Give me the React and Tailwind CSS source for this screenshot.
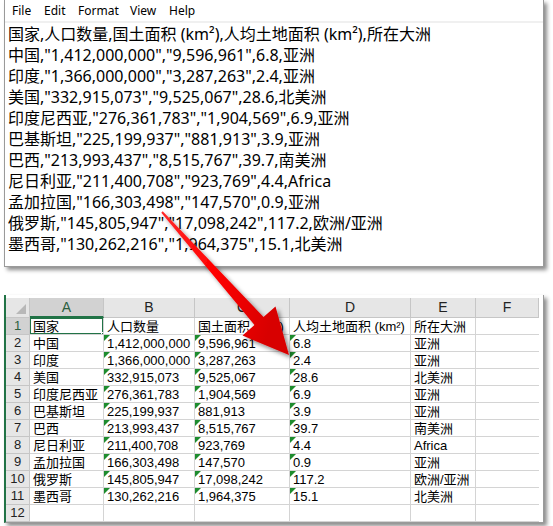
import React from "react";

const menu = [
  ["File", "w-[32px]"],
  ["Edit", "w-[34px]"],
  ["Format", "w-[52px]"],
  ["View", "w-[39px]"],
  ["Help", "w-[40px]"],
];

const csvLines = [
  "国家,人口数量,国土面积 (km²),人均土地面积 (km²),所在大洲",
  '中国,"1,412,000,000","9,596,961",6.8,亚洲',
  '印度,"1,366,000,000","3,287,263",2.4,亚洲',
  '美国,"332,915,073","9,525,067",28.6,北美洲',
  '印度尼西亚,"276,361,783","1,904,569",6.9,亚洲',
  '巴基斯坦,"225,199,937","881,913",3.9,亚洲',
  '巴西,"213,993,437","8,515,767",39.7,南美洲',
  '尼日利亚,"211,400,708","923,769",4.4,Africa',
  '孟加拉国,"166,303,498","147,570",0.9,亚洲',
  '俄罗斯,"145,805,947","17,098,242",117.2,欧洲/亚洲',
  '墨西哥,"130,262,216","1,964,375",15.1,北美洲',
];

const rows = [
  ["国家", "人口数量", "国土面积 (km²)", "人均土地面积 (km²)", "所在大洲"],
  ["中国", "1,412,000,000", "9,596,961", "6.8", "亚洲"],
  ["印度", "1,366,000,000", "3,287,263", "2.4", "亚洲"],
  ["美国", "332,915,073", "9,525,067", "28.6", "北美洲"],
  ["印度尼西亚", "276,361,783", "1,904,569", "6.9", "亚洲"],
  ["巴基斯坦", "225,199,937", "881,913", "3.9", "亚洲"],
  ["巴西", "213,993,437", "8,515,767", "39.7", "南美洲"],
  ["尼日利亚", "211,400,708", "923,769", "4.4", "Africa"],
  ["孟加拉国", "166,303,498", "147,570", "0.9", "亚洲"],
  ["俄罗斯", "145,805,947", "17,098,242", "117.2", "欧洲/亚洲"],
  ["墨西哥", "130,262,216", "1,964,375", "15.1", "北美洲"],
  ["", "", "", "", ""],
];

const cols = ["A", "B", "C", "D", "E", "F"];

function Notepad() {
  return (
    <div className="ml-[4px] w-[540px] h-[267px] bg-white border-l border-r border-b border-[#9a9a9a] shadow-[3px_3px_4px_rgba(0,0,0,0.45)]">
      <div className="h-[23px] flex items-center pl-[7px] border-b-2 border-[#f0f0f0] text-[12px] text-black" style={{ fontFamily: "'Noto Sans', 'Open Sans', sans-serif" }}>
        {menu.map(([label, w]) => (
          <span key={label} className={w}>{label}</span>
        ))}
      </div>
      <div className="pl-[3px] pt-[1px] text-[16px] leading-[21px] text-black whitespace-nowrap" style={{ fontFamily: "'Noto Sans', 'Noto Sans CJK SC', sans-serif" }}>
        {csvLines.map((line) => (
          <div key={line}>{line}</div>
        ))}
      </div>
    </div>
  );
}

function Sheet() {
  return (
    <div className="ml-[4px] mt-[28px] w-[540px] bg-white border-l-2 border-[#217346] border-r border-b border-r-[#9a9a9a] border-b-[#9a9a9a] pt-[3px] shadow-[3px_3px_4px_rgba(0,0,0,0.45)] text-[13px] text-black" style={{ fontFamily: "'Liberation Sans', 'Noto Sans CJK SC', sans-serif" }}>
      <div className="grid grid-cols-[24px_74px_91px_95px_121px_65px_63px]">
        <div className="h-[20px] bg-[#e6e6e6] border-r border-b border-[#c6c6c6] flex items-end justify-end pr-[3px] pb-[3px]">
          <svg width="10" height="10" viewBox="0 0 10 10">
            <polygon points="10,0 10,10 0,10" fill="#b8b8b8" />
          </svg>
        </div>
        {cols.map((c) => (
          <div key={c} className={`h-[20px] flex items-center justify-center text-[14px] border-r border-[#c6c6c6] ${c === "A" ? "bg-[#d2d2d2] text-[#2c5f3f] border-b-2 border-b-[#217346]" : "bg-[#e6e6e6] text-[#222] border-b"}`}>
            {c}
          </div>
        ))}
        {rows.map((r, i) => (
          <React.Fragment key={i}>
            <div className={`h-[17px] flex items-center justify-center border-r border-b border-[#c6c6c6] ${i === 0 ? "bg-[#d2d2d2] text-[#2c5f3f]" : "bg-[#e6e6e6] text-[#222]"}`}>
              {i + 1}
            </div>
            {r.map((v, j) => (
              <div key={j} className="relative h-[17px] leading-[17px] pl-[3px] border-r border-b border-[#d4d4d4] whitespace-nowrap overflow-hidden">
                {i > 0 && i < 11 && j >= 1 && j <= 3 && (
                  <svg className="absolute left-0 top-0" width="6" height="6" viewBox="0 0 6 6">
                    <polygon points="0,0 6,0 0,6" fill="#1e8c2e" />
                  </svg>
                )}
                {v}
                {i === 0 && j === 0 && (
                  <>
                    <div className="absolute inset-[-1px] border-2 border-[#217346]" />
                    <div className="absolute right-[-4px] bottom-[-4px] w-[6px] h-[6px] bg-[#217346] border border-white" />
                  </>
                )}
              </div>
            ))}
            <div className="h-[17px] border-b border-[#d4d4d4]" />
          </React.Fragment>
        ))}
      </div>
    </div>
  );
}

function Arrow() {
  return (
    <svg className="absolute left-0 top-0 pointer-events-none" width="553" height="526" viewBox="0 0 553 526">
      <defs>
        <linearGradient id="redg" x1="0" y1="0" x2="1" y2="0.3">
          <stop offset="0" stopColor="#ff2a2a" />
          <stop offset="0.5" stopColor="#ff0000" />
          <stop offset="1" stopColor="#d80000" />
        </linearGradient>
        <filter id="sh" x="-20%" y="-20%" width="140%" height="140%">
          <feDropShadow dx="3" dy="3" stdDeviation="2" floodColor="#000" floodOpacity="0.45" />
        </filter>
      </defs>
      <polygon
        points="161.3,212.7 254.5,325 242.5,335.6 289,355 275.5,306.4 263.5,317 162.7,211.3"
        fill="url(#redg)"
        filter="url(#sh)"
      />
    </svg>
  );
}

export default function App() {
  return (
    <div className="relative w-[553px] h-[526px] bg-white overflow-hidden">
      <Notepad />
      <Sheet />
      <Arrow />
    </div>
  );
}
